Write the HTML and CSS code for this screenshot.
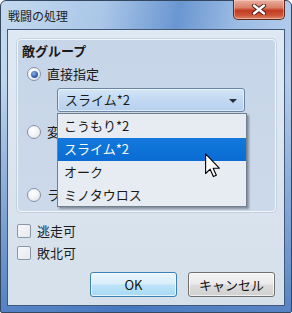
FILE: index.html
```html
<!DOCTYPE html>
<html lang="ja">
<head>
    <meta charset="UTF-8">
    <title>戦闘の処理</title>
    <link rel="stylesheet" href="styles.css">
</head>
<body>
    <div class="window">
        <div class="titlebar">
            <span class="title">戦闘の処理</span>
            <div class="close">
                <svg width="16" height="11" viewBox="0 0 16 11">
                    <path d="M3 1.5 L13 9.5 M13 1.5 L3 9.5" stroke="#4a1a12" stroke-width="4.2" stroke-linecap="round"/>
                    <path d="M3 1.5 L13 9.5 M13 1.5 L3 9.5" stroke="#ffffff" stroke-width="2.4" stroke-linecap="round"/>
                </svg>
            </div>
        </div>

        <div class="client">
            <div class="group">
                <div class="group-title">敵グループ</div>

                <div class="option">
                    <span class="radio checked"></span>
                    <span>直接指定</span>
                </div>

                <div class="combo-wrap">
                    <div class="combo">
                        <span>スライム*2</span>
                        <span class="arrow"></span>
                    </div>
                    <ul class="dropdown">
                        <li>こうもり*2</li>
                        <li class="selected">スライム*2</li>
                        <li>オーク</li>
                        <li>ミノタウロス</li>
                    </ul>
                </div>

                <div class="option second">
                    <span class="radio"></span>
                    <span>変数で指定</span>
                </div>

                <div class="option third">
                    <span class="radio"></span>
                    <span>ランダム</span>
                </div>
            </div>

            <div class="check-row first">
                <span class="checkbox"></span>
                <span>逃走可</span>
            </div>
            <div class="check-row">
                <span class="checkbox"></span>
                <span>敗北可</span>
            </div>

            <div class="buttons">
                <button class="btn default">OK</button>
                <button class="btn">キャンセル</button>
            </div>

            <svg class="cursor" width="16" height="25" viewBox="0 0 13 20">
                <path d="M0.5 0.5 L0.5 16.5 L4.2 13 L6.8 19 L9.2 18 L6.6 12.2 L11.6 12.2 Z" fill="#ffffff" stroke="#000000" stroke-width="0.9" stroke-linejoin="round"/>
            </svg>
        </div>
    </div>
</body>
</html>
```

FILE: styles.css
```css
body {
    margin: 0;
    font-family: "Noto Sans CJK JP", "Noto Sans", sans-serif;
    font-size: 13px;
    color: #1a1a1a;
    background: #ffffff;
}
.window {
    width: 292px;
    height: 313px;
    box-sizing: border-box;
    border: 1px solid #34475f;
    border-radius: 6px 6px 2px 2px;
    padding: 0 6px 6px 6px;
    background:
        linear-gradient(180deg, rgba(255, 255, 255, 0) 25%, rgba(60, 110, 185, 0.8) 100%),
        linear-gradient(100deg, #c4d9ef 0%, #aac7e8 30%, #6a96d1 52%, #9dbde4 70%, #c3d8ef 100%);
}
.titlebar {
    height: 28px;
    display: flex;
    justify-content: space-between;
    align-items: flex-start;
}
.title {
    margin-top: 6px;
    padding-left: 1px;
    font-size: 12px;
    line-height: 18px;
    color: #1e1e1e;
}
.close {
    margin-top: -1px;
    width: 50px;
    height: 19px;
    border: 1px solid #5b2b24;
    border-top: none;
    border-radius: 0 0 5px 5px;
    background: linear-gradient(180deg, #eab0a2 0%, #d98068 40%, #c23b22 55%, #cc5337 80%, #e08a6c 100%);
    box-shadow: inset 0 0 0 1px rgba(255, 220, 210, 0.45);
    display: flex;
    justify-content: center;
    align-items: center;
}
.client {
    position: relative;
    height: 277px;
    box-sizing: border-box;
    border: 1px solid #425878;
    background: linear-gradient(180deg, #dfe9f4 0%, #d6e0eb 100%);
    padding: 9px 8px 0 9px;
}
.group {
    height: 173px;
    box-sizing: border-box;
    border: 1px solid #f2f6fb;
    border-radius: 4px;
    box-shadow: 0 0 0 1px rgba(150, 170, 195, 0.35);
    background: linear-gradient(180deg, #c6d5e8 0%, #ccd9ea 100%);
    padding-top: 3px;
}
.group-title {
    margin-left: 4px;
    font-weight: bold;
    font-size: 13px;
    line-height: 16px;
}
.option {
    display: flex;
    align-items: center;
    gap: 6px;
    margin: 7px 0 0 9px;
    height: 16px;
    line-height: 16px;
    white-space: nowrap;
}
.option.second {
    margin-top: 12px;
}
.option.third {
    margin-top: 47px;
}
.radio {
    flex: none;
    width: 12px;
    height: 12px;
    border: 1px solid #8693a5;
    border-radius: 50%;
    background: radial-gradient(circle at 40% 35%, #ffffff 0%, #f1f3f6 50%, #d4d9e0 100%);
    position: relative;
}
.radio.checked::after {
    content: "";
    position: absolute;
    left: 2.5px;
    top: 2.5px;
    width: 7px;
    height: 7px;
    border-radius: 50%;
    background: radial-gradient(circle at 40% 35%, #8fb2e6 0%, #3763b0 55%, #24468a 100%);
}
.combo-wrap {
    position: relative;
    margin: 6px 0 0 39px;
    width: 188px;
}
.combo {
    height: 24px;
    box-sizing: border-box;
    border: 1px solid #6a84a3;
    border-radius: 3px;
    background: linear-gradient(180deg, #d4e5f7 0%, #c2d9f2 50%, #b6d0ee 100%);
    box-shadow: inset 0 0 0 1px rgba(255, 255, 255, 0.55);
    display: flex;
    align-items: center;
    justify-content: space-between;
    padding: 0 7px 0 7px;
    line-height: 20px;
}
.arrow {
    width: 0;
    height: 0;
    border-left: 4px solid transparent;
    border-right: 4px solid transparent;
    border-top: 4px solid #27313d;
    margin-top: 1px;
}
.dropdown {
    position: absolute;
    top: 25px;
    left: 0;
    width: 190px;
    height: 94px;
    box-sizing: border-box;
    margin: 0;
    padding: 1px 0 0 0;
    list-style: none;
    background: #e7ecf2;
    border: 1px solid #737f8d;
    box-shadow: 2px 2px 2px rgba(40, 50, 60, 0.45);
    z-index: 2;
}
.dropdown li {
    height: 23px;
    line-height: 22px;
    padding-left: 6px;
}
.dropdown li.selected {
    background: linear-gradient(180deg, #1379dc 0%, #0a6cd3 100%);
    color: #ffffff;
}
.check-row {
    display: flex;
    align-items: center;
    gap: 6px;
    height: 16px;
    line-height: 16px;
    margin-top: 6px;
}
.check-row.first {
    margin-top: 11px;
}
.checkbox {
    flex: none;
    width: 12px;
    height: 12px;
    border: 1px solid #8c97a6;
    border-radius: 2px;
    background: linear-gradient(135deg, #f6f7f9 0%, #e6e9ee 100%);
}
.buttons {
    display: flex;
    justify-content: flex-end;
    gap: 11px;
    margin-top: 11px;
    padding-right: 1px;
}
.btn {
    width: 87px;
    height: 25px;
    border: 1px solid #707070;
    border-radius: 3px;
    background: linear-gradient(180deg, #f3f3f3 0%, #ebebeb 48%, #dddddd 52%, #cfcfcf 100%);
    box-shadow: inset 0 0 0 1px rgba(255, 255, 255, 0.7);
    font-family: "Noto Sans CJK JP", "Noto Sans", sans-serif;
    font-size: 13px;
    line-height: 20px;
    color: #111111;
    padding: 0;
}
.btn.default {
    border-color: #3c7fb1;
    background: linear-gradient(180deg, #eaf5fc 0%, #d9eefb 48%, #bee3f8 52%, #a7d9f5 100%);
}
.cursor {
    position: absolute;
    left: 197px;
    top: 123px;
    z-index: 3;
}
```
